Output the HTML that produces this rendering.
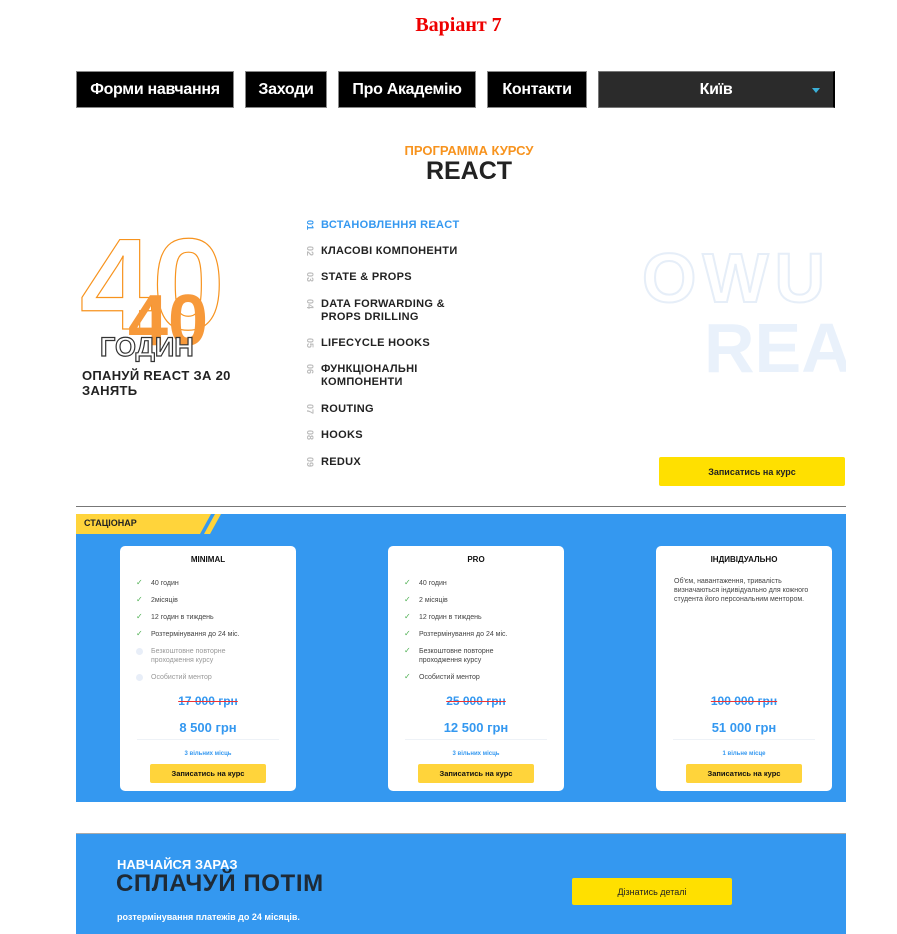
<!DOCTYPE html>
<html><head><meta charset="utf-8"><style>
*{margin:0;padding:0;box-sizing:border-box}
body{width:897px;height:934px;position:relative;background:#fff;font-family:"Liberation Sans","DejaVu Sans",sans-serif;overflow:hidden}
.a{position:absolute}
h1{position:absolute;left:0;width:917px;top:14px;text-align:center;font:bold 20px "Liberation Serif",serif;color:#e00}
.nav{position:absolute;top:71px;height:37px;background:#000;color:#fff;font-size:16px;font-weight:bold;display:flex;align-items:center;justify-content:center;border:1px solid #888;letter-spacing:-0.3px}
.li{position:absolute;left:321px;font-size:11px;font-weight:bold;color:#222;line-height:13px;letter-spacing:0.3px}
.num{position:absolute;left:303px;font-size:9px;font-weight:bold;color:#bbb;transform:rotate(90deg);transform-origin:center;width:14px;text-align:center}
.card{position:absolute;top:546px;width:176px;height:245px;background:#fff;border-radius:5px}
.card h3{position:absolute;top:9px;width:100%;text-align:center;font-size:8px;font-weight:bold;color:#111}
.f{position:absolute;left:31px;font-size:7px;color:#444;line-height:9px}
.f:before{content:"✓";position:absolute;left:-15px;top:-1px;color:#4caf50;font-size:8px;font-weight:bold}
.f.off{color:#999}.f.off:before{content:"";width:7px;height:7px;border-radius:50%;background:#e8eef8;top:1px}
.old{position:absolute;top:148px;width:100%;text-align:center;font-size:12px;font-weight:bold;color:#3498f0;text-decoration:line-through;text-decoration-color:#e33}
.new{position:absolute;top:174px;width:100%;text-align:center;font-size:13px;font-weight:bold;color:#3498f0}
.sep{position:absolute;top:193px;left:17px;right:17px;border-top:1px solid #eef2f7}
.seat{position:absolute;top:205px;width:100%;text-align:center;font-size:6px;font-weight:bold;color:#3498f0}
.btn{position:absolute;top:218px;left:30px;width:116px;height:19px;background:#ffd43b;border-radius:2px;font-size:7.5px;font-weight:bold;color:#111;display:flex;align-items:center;justify-content:center}
</style></head><body>
<h1>Варіант 7</h1>
<div class="nav" style="left:76px;width:158px">Форми навчання</div>
<div class="nav" style="left:245px;width:82px">Заходи</div>
<div class="nav" style="left:338px;width:138px">Про Академію</div>
<div class="nav" style="left:487px;width:100px">Контакти</div>
<div class="nav" style="left:598px;width:237px;background:#2b2b2b;border-color:#777;border-right:2px solid #000">Київ<span class="a" style="right:13px;top:16px;border:4px solid transparent;border-top:5px solid #3bb0d8"></span></div>

<div class="a" style="left:0;width:938px;top:143px;text-align:center;font-size:13px;font-weight:bold;color:#f7931e">ПРОГРАММА КУРСУ</div>
<div class="a" style="left:0;width:938px;top:157px;text-align:center;font-size:25px;font-weight:bold;color:#222">REACT</div>

<svg class="a" style="left:70px;top:215px" width="200" height="150">
<text x="10" y="114" font-family="Liberation Sans" font-weight="bold" font-size="130" fill="none" stroke="#f7931e" stroke-width="1.2">40</text>
<text x="58" y="130" font-family="Liberation Sans" font-weight="bold" font-size="72" fill="#f7993a">40</text>
<text x="30" y="141" font-family="Liberation Sans" font-weight="bold" font-size="27" fill="#fff" stroke="#333" stroke-width="1.2">ГОДИН</text>
</svg>
<div class="a" style="left:82px;top:368px;font-size:13px;font-weight:bold;color:#222;line-height:15px;letter-spacing:0.3px">ОПАНУЙ REACT ЗА 20<br>ЗАНЯТЬ</div>

<div class="num" style="top:220px;color:#3498f0">01</div><div class="li" style="top:219px;color:#3498f0">ВСТАНОВЛЕННЯ REACT</div>
<div class="num" style="top:246px">02</div><div class="li" style="top:245px">КЛАСОВІ КОМПОНЕНТИ</div>
<div class="num" style="top:272px">03</div><div class="li" style="top:271px">STATE &amp; PROPS</div>
<div class="num" style="top:299px">04</div><div class="li" style="top:298px">DATA FORWARDING &amp;<br>PROPS DRILLING</div>
<div class="num" style="top:338px">05</div><div class="li" style="top:337px">LIFECYCLE HOOKS</div>
<div class="num" style="top:364px">06</div><div class="li" style="top:363px">ФУНКЦІОНАЛЬНІ<br>КОМПОНЕНТИ</div>
<div class="num" style="top:404px">07</div><div class="li" style="top:403px">ROUTING</div>
<div class="num" style="top:430px">08</div><div class="li" style="top:429px">HOOKS</div>
<div class="num" style="top:457px">09</div><div class="li" style="top:456px">REDUX</div>

<svg class="a" style="left:640px;top:240px" width="206" height="140">
<text x="2" y="62" font-family="Liberation Sans" font-weight="bold" font-size="70" letter-spacing="6" fill="none" stroke="#e6eef8" stroke-width="2">OWU</text>
<text x="64" y="132" font-family="Liberation Sans" font-weight="bold" font-size="70" fill="#e9f1fb">REACT</text>
</svg>
<div class="a" style="left:659px;top:457px;width:186px;height:29px;background:#ffe000;border-radius:2px;font-size:9px;font-weight:bold;color:#222;display:flex;align-items:center;justify-content:center">Записатись на курс</div>

<div class="a" style="left:76px;top:506px;width:770px;border-top:1px solid #777"></div>
<div class="a" style="left:76px;top:514px;width:770px;height:288px;background:#3498f0"></div>
<svg class="a" style="left:76px;top:514px" width="150" height="20"><polygon points="0,0 135,0 124,20 0,20" fill="#ffd43b"/><polygon points="139,0 145,0 134,20 128,20" fill="#ffd43b"/></svg>
<div class="a" style="left:84px;top:518px;font-size:9px;font-weight:bold;color:#222">СТАЦІОНАР</div>

<div class="card" style="left:120px"><h3>MINIMAL</h3>
<div class="f" style="top:33px">40 годин</div><div class="f" style="top:50px">2місяців</div><div class="f" style="top:67px">12 годин в тиждень</div><div class="f" style="top:84px">Розтермінування до 24 міс.</div><div class="f off" style="top:101px">Безкоштовне повторне<br>проходження курсу</div><div class="f off" style="top:127px">Особистий ментор</div>
<div class="old">17 000 грн</div><div class="new">8 500 грн</div><div class="sep"></div><div class="seat">3 вільних місць</div><div class="btn">Записатись на курс</div></div>

<div class="card" style="left:388px"><h3>PRO</h3>
<div class="f" style="top:33px">40 годин</div><div class="f" style="top:50px">2 місяців</div><div class="f" style="top:67px">12 годин в тиждень</div><div class="f" style="top:84px">Розтермінування до 24 міс.</div><div class="f" style="top:101px">Безкоштовне повторне<br>проходження курсу</div><div class="f" style="top:127px">Особистий ментор</div>
<div class="old">25 000 грн</div><div class="new">12 500 грн</div><div class="sep"></div><div class="seat">3 вільних місць</div><div class="btn">Записатись на курс</div></div>

<div class="card" style="left:656px"><h3>ІНДИВІДУАЛЬНО</h3>
<div class="a" style="left:18px;top:31px;width:145px;font-size:7px;color:#444;line-height:9px">Об'єм, навантаження, тривалість визначаються індивідуально для кожного студента його персональним ментором.</div>
<div class="old">100 000 грн</div><div class="new">51 000 грн</div><div class="sep"></div><div class="seat">1 вільне місце</div><div class="btn">Записатись на курс</div></div>

<div class="a" style="left:76px;top:833px;width:770px;height:101px;background:#3498f0;border-top:1px solid #aaa"></div>
<div class="a" style="left:117px;top:857px;font-size:13px;font-weight:bold;color:#fff">НАВЧАЙСЯ ЗАРАЗ</div>
<div class="a" style="left:116px;top:870px;font-size:24px;font-weight:bold;color:#1e2a36;letter-spacing:0.6px">СПЛАЧУЙ ПОТІМ</div>
<div class="a" style="left:117px;top:912px;font-size:9px;font-weight:bold;color:#fff">розтермінування платежів до 24 місяців.</div>
<div class="a" style="left:572px;top:878px;width:160px;height:27px;background:#ffe000;border-radius:2px;font-size:9px;color:#222;display:flex;align-items:center;justify-content:center">Дізнатись деталі</div>
</body></html>
